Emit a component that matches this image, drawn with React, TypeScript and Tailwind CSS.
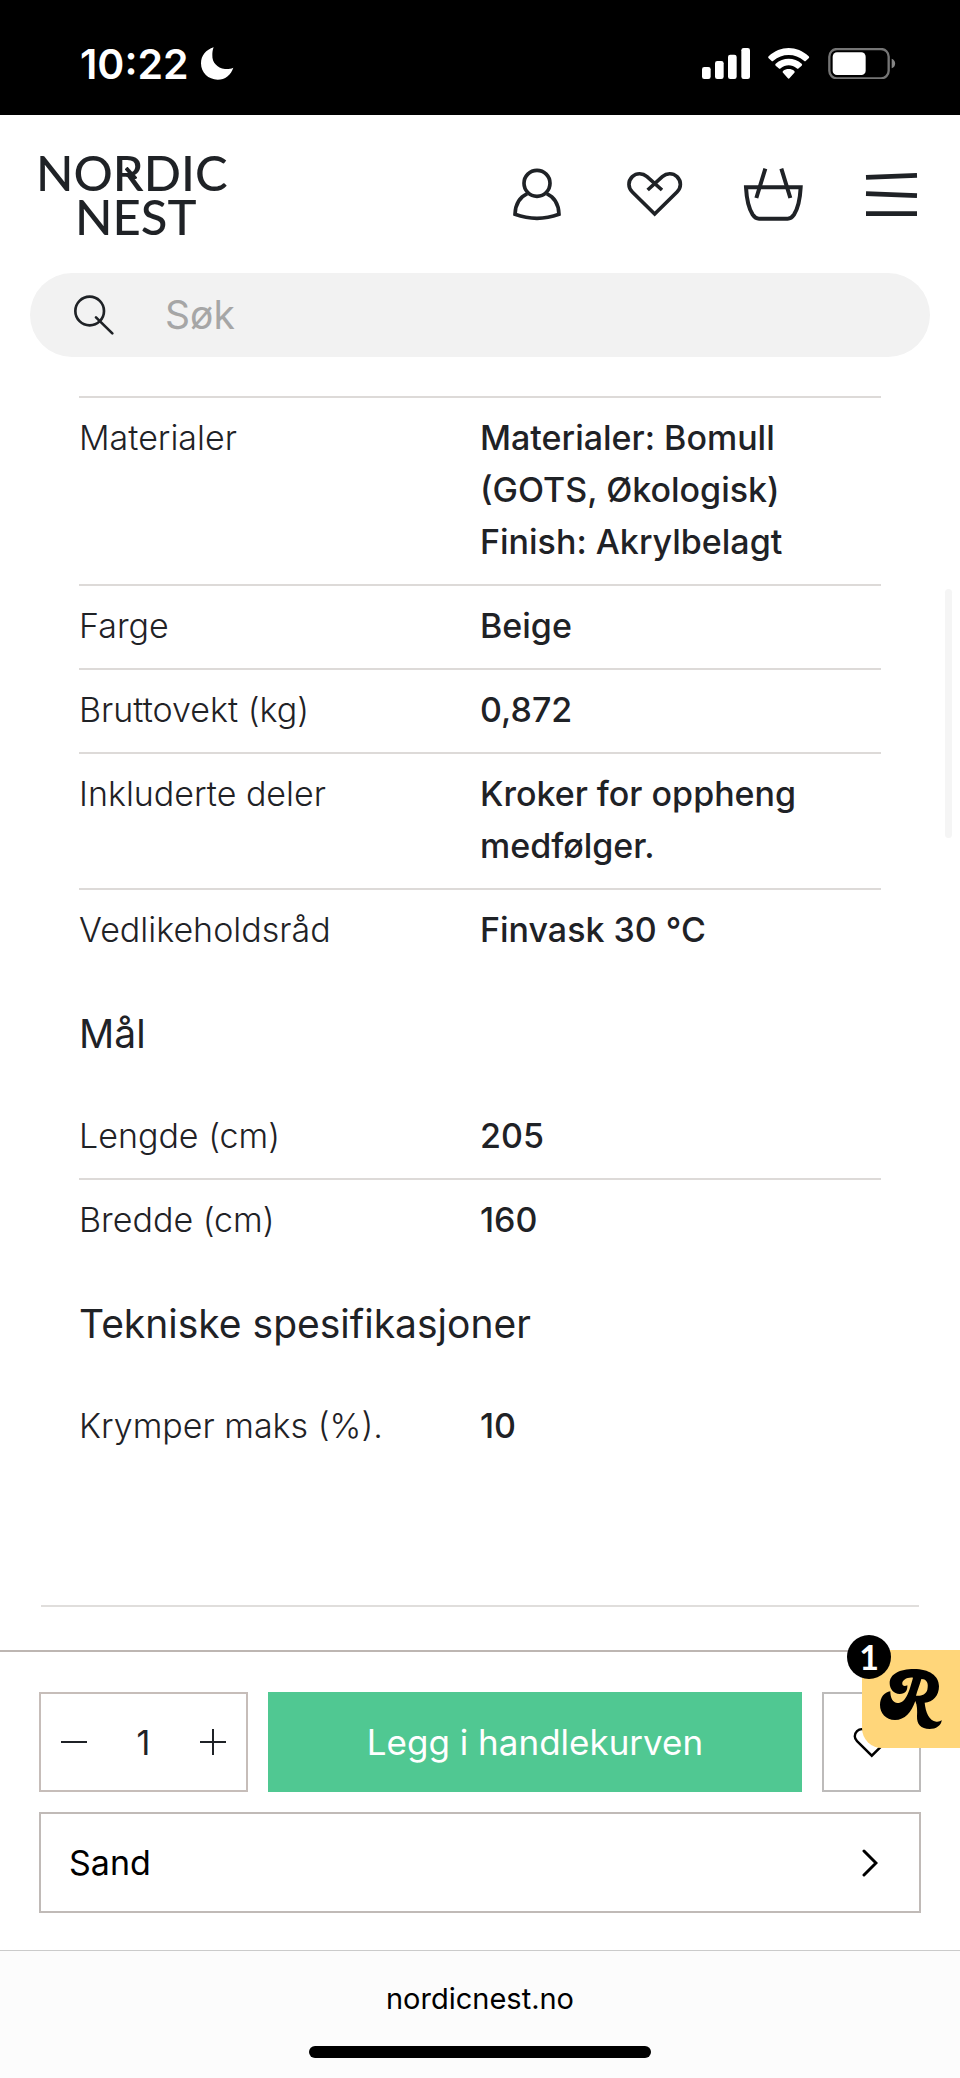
import { useState } from 'react'
import type { ReactNode } from 'react'

type Spec = { label: string; value: string[] }

const PRODUCT_SPECS: Spec[] = [
  { label: 'Materialer', value: ['Materialer: Bomull', '(GOTS, Økologisk)', 'Finish: Akrylbelagt'] },
  { label: 'Farge', value: ['Beige'] },
  { label: 'Bruttovekt (kg)', value: ['0,872'] },
  { label: 'Inkluderte deler', value: ['Kroker for oppheng', 'medfølger.'] },
  { label: 'Vedlikeholdsråd', value: ['Finvask 30 °C'] },
]

const SIZE_SPECS: Spec[] = [
  { label: 'Lengde (cm)', value: ['205'] },
  { label: 'Bredde (cm)', value: ['160'] },
]

const TECH_SPECS: Spec[] = [{ label: 'Krymper maks (%).', value: ['10'] }]

function HeartIcon({ className }: { className: string }) {
  return (
    <svg viewBox="435 138 180 168" fill="none" stroke="currentColor" strokeWidth="11" className={className} aria-hidden="true">
      <path d="M546 210 501 170C488 159 470 158 457 170C443 184 444 203 457 216L524 282L591 216C604 203 605 184 591 170C578 158 560 159 547 170L503 210" />
    </svg>
  )
}

function StatusBar() {
  return (
    <div className="flex h-[115px] items-center justify-between bg-black pt-3 pr-[64px] pl-[80px] text-white">
      <div className="flex items-center gap-3">
        <span className="text-[41px] leading-[44px] font-semibold">10:22</span>
        <svg viewBox="600 144 99 99" className="size-[33px]" fill="currentColor" aria-hidden="true">
          <path d="M638 145C615 152 600 170 600 193C600 221 622 242 650 242C672 242 690 228 697 206C688 210 680 211 672 210C648 207 633 190 634 168C634 160 635 152 638 145Z" />
        </svg>
      </div>
      <div className="flex items-center gap-[18px]">
        <svg viewBox="0 0 144 93" className="h-[31px] w-[48px]" fill="currentColor" aria-hidden="true">
          <rect x="0" y="57" width="26" height="36" rx="7" />
          <rect x="39" y="39" width="26" height="54" rx="7" />
          <rect x="78" y="20" width="26" height="73" rx="7" />
          <rect x="118" y="0" width="26" height="93" rx="7" />
        </svg>
        <svg viewBox="325 84 126 93" className="h-[31px] w-[42px]" fill="currentColor" aria-hidden="true">
          <path d="M327 109C362 76 412 76 447 109Q450 112 447 115L438 123Q436 125 433 122C407 99 367 99 341 122Q338 125 336 123L327 115Q324 112 327 109Z" />
          <path d="M348 131C370 111 404 111 426 131Q429 134 426 137L417 145Q414 148 411 145C397 133 377 133 363 145Q360 148 357 145L348 137Q345 134 348 131Z" />
          <path d="M370 153C380 145 394 145 404 153Q406 156 404 158L390 174Q387 178 384 174L370 158Q368 156 370 153Z" />
        </svg>
        <svg viewBox="504 84 204 93" className="h-[31px] w-[68px]" aria-hidden="true">
          <rect x="508" y="87" width="178" height="88" rx="23" fill="none" stroke="#757575" strokeWidth="7" />
          <rect x="518" y="97" width="99" height="68" rx="13" fill="#fff" />
          <path d="M695 116C709 120 709 141 695 145Z" fill="#858585" />
        </svg>
      </div>
    </div>
  )
}

function Header() {
  return (
    <header>
      <div className="flex h-[158px] items-center justify-between pr-[42px] pl-9">
        <a href="#" aria-label="Nordic Nest" className="relative font-['Lato',sans-serif] text-[49px] leading-[44px] font-medium">
          <span className="block">NORDIC</span>
          <span className="block pl-[39px]">NEST</span>
          {/* Notch where the R's leg crosses its bowl */}
          <svg viewBox="0 0 12 12" className="absolute top-[17px] left-[89px] size-3" stroke="currentColor" strokeWidth="4" aria-hidden="true">
            <path d="M1 1 11 12" />
          </svg>
        </a>
        <nav className="flex items-center gap-[58px]">
          <a href="#" aria-label="Min side">
            <svg viewBox="92 138 168 168" className="h-14 w-14" fill="none" stroke="currentColor" strokeWidth="11" aria-hidden="true">
              <circle cx="170" cy="190" r="39" />
              <path d="M141 221C119 231 105 252 104 283Q170 307 236 283C235 252 221 231 199 221" />
            </svg>
          </a>
          <a href="#" aria-label="Favoritter">
            <HeartIcon className="h-14 w-[60px]" />
          </a>
          <a href="#" aria-label="Handlekurv">
            <svg viewBox="788 138 192 168" className="h-14 w-16" fill="none" stroke="currentColor" strokeWidth="12" aria-hidden="true">
              <path d="M797 202H961C959 240 951 268 941 284Q933 296 922 296H836Q825 296 817 284C807 268 799 240 797 202Z" />
              <path d="M855 146 828 234M903 146 930 234" />
            </svg>
          </a>
          <button type="button" aria-label="Meny">
            <svg viewBox="1154 138 159 168" className="h-14 w-[53px]" fill="none" stroke="currentColor" strokeWidth="14" aria-hidden="true">
              <path d="M1157 172 1310 166M1157 221 1310 227M1157 281H1310" />
            </svg>
          </button>
        </nav>
      </div>
      <label className="mx-[30px] flex h-[84px] items-center gap-[50px] rounded-full bg-[#f2f2f2] px-[43px]">
        <svg viewBox="218 132 126 126" className="size-[42px] shrink-0" fill="none" stroke="currentColor" strokeWidth="8" aria-hidden="true">
          <circle cx="268" cy="183" r="43" />
          <path d="M287 202 336 250" strokeLinecap="round" />
        </svg>
        <input
          type="search"
          aria-label="Søk"
          placeholder="Søk"
          className="min-w-0 flex-1 bg-transparent text-[39px] leading-[52px] outline-none placeholder:text-[#a6a6a6]"
        />
      </label>
    </header>
  )
}

function SpecTable({ rows }: { rows: Spec[] }) {
  return (
    <table className="w-full table-fixed border-collapse text-left text-[34px] leading-[52px]">
      <tbody>
        {rows.map((row) => (
          <tr key={row.label} className="border-b-2 border-[#dddad8] last:border-b-0">
            <th scope="row" className="w-1/2 pt-3.5 pb-4 align-top font-light">
              {row.label}
            </th>
            <td className="w-1/2 pt-3.5 pb-4 align-top font-medium">
              {row.value.map((line) => (
                <span key={line} className="block">
                  {line}
                </span>
              ))}
            </td>
          </tr>
        ))}
      </tbody>
    </table>
  )
}

function SpecHeading({ children }: { children: ReactNode }) {
  return <h2 className="py-9 text-[39px] leading-[52px] font-normal">{children}</h2>
}

function BuyBar() {
  const [count, setCount] = useState(1)

  return (
    <section className="relative border-t-2 border-[#bdb6b2] px-[39px] pt-10 pb-[37px]">
      <div className="flex h-[100px] gap-5">
        <div className="flex w-[209px] items-center justify-between border-2 border-[#c6bdb9] px-5">
          <button type="button" aria-label="Færre" onClick={() => setCount(Math.max(1, count - 1))}>
            <svg viewBox="0 0 26 26" className="size-[26px]" stroke="currentColor" strokeWidth="2" aria-hidden="true">
              <path d="M0 13H26" />
            </svg>
          </button>
          <input
            aria-label="Antall"
            value={count}
            onChange={(e) => setCount(Number(e.target.value) || 1)}
            className="w-16 bg-transparent text-center text-[34px] outline-none"
          />
          <button type="button" aria-label="Flere" onClick={() => setCount(count + 1)}>
            <svg viewBox="0 0 26 26" className="size-[26px]" stroke="currentColor" strokeWidth="2" aria-hidden="true">
              <path d="M0 13H26M13 0V26" />
            </svg>
          </button>
        </div>
        <button type="button" className="flex-1 bg-[#50c892] text-[35px] text-white">
          Legg i handlekurven
        </button>
        <button type="button" aria-label="Legg til i favoritter" className="flex w-[99px] items-center justify-center border-2 border-[#bdbbba] text-black">
          <HeartIcon className="h-[37px] w-10" />
        </button>
      </div>
      <button type="button" className="mt-5 flex h-[101px] w-full items-center justify-between border-2 border-[#c0bab7] pr-[41px] pl-7 text-[34px] text-black">
        Sand
        <svg viewBox="0 0 16 28" className="h-7 w-4" fill="none" stroke="currentColor" strokeWidth="3" strokeLinecap="round" aria-hidden="true">
          <path d="M2 2 14 14 2 26" />
        </svg>
      </button>

      {/* Rewards launcher, pinned over the corner of the bar */}
      <button type="button" aria-label="Rewards" className="absolute -top-0.5 right-0 flex size-[98px] items-center justify-center rounded-bl-[20px] bg-[#ffd67a] text-black">
        <svg viewBox="1200 267 192 186" className="h-[62px] w-16" fill="currentColor" fillRule="evenodd" aria-hidden="true">
          <path d="M1262 345C1244 345 1232 330 1232 313C1232 285 1262 270 1305 270C1350 270 1380 290 1380 322C1380 350 1362 370 1337 371C1340 400 1350 425 1372 428C1379 429 1384 426 1388 423C1388 440 1370 450 1352 450C1325 450 1313 435 1314 412C1315 395 1315 380 1309 366C1297 400 1278 423 1248 423C1220 423 1203 402 1203 378C1203 355 1216 340 1234 337C1234 358 1242 372 1256 372C1280 372 1290 340 1302 296C1285 294 1268 303 1270 316C1272 323 1280 321 1285 319C1286 334 1280 345 1262 345ZM1327 300C1345 300 1349 315 1345 332C1341 347 1325 352 1311 350C1315 335 1322 318 1327 300Z" />
        </svg>
        <span className="absolute -top-[15px] -left-[15px] flex size-11 items-center justify-center rounded-full bg-black font-['Lato',sans-serif] text-[34px] leading-none font-bold text-white">
          1
        </span>
      </button>
    </section>
  )
}

export default function App() {
  return (
    <div className="relative flex min-h-screen flex-col bg-white font-['Inter',sans-serif] text-[#1f2226]">
      <StatusBar />
      <Header />
      <main className="flex-1 pt-[39px]">
        <div className="mx-[79px]">
          <div className="border-t-2 border-[#dddad8]">
            <SpecTable rows={PRODUCT_SPECS} />
          </div>
          <SpecHeading>Mål</SpecHeading>
          <SpecTable rows={SIZE_SPECS} />
          <SpecHeading>Tekniske spesifikasjoner</SpecHeading>
          <SpecTable rows={TECH_SPECS} />
        </div>
        <hr className="mx-[41px] mt-[137px] mb-[42px] border-t-2 border-[#e0dedc]" />
      </main>
      <BuyBar />
      <footer className="flex h-[128px] flex-col items-center justify-between border-t border-[#cbcbcb] bg-[#fcfcfc] pt-7 pb-5 text-black">
        <span className="text-[29px] leading-10">nordicnest.no</span>
        <div className="h-3 w-[342px] rounded-full bg-black" />
      </footer>

      {/* Scroll indicator */}
      <div className="absolute top-[589px] right-2 h-[249px] w-[7px] rounded-full bg-[#f5f5f5]" />
    </div>
  )
}
